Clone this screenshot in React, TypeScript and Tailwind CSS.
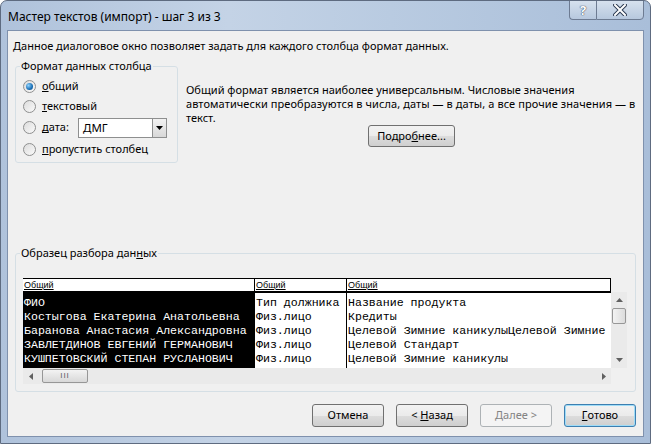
import React from "react";

const ui = { fontFamily: '"Noto Sans", "Segoe UI", sans-serif' };
const mono = { fontFamily: '"Liberation Mono", "Courier New", monospace' };
const small = { fontFamily: '"Liberation Sans", Arial, sans-serif' };

function Radio({ checked, label, u }: { checked?: boolean; label: string; u: number }) {
  return (
    <div className="flex items-center h-[20px]">
      <span className="w-[13px] h-[13px] rounded-full border border-[#8e8f8f] bg-gradient-to-br from-[#dcdcdc] to-[#fafafa] flex items-center justify-center shrink-0">
        {checked && (
          <span className="w-[7px] h-[7px] rounded-full bg-[radial-gradient(circle_at_35%_35%,#8fd3ff,#1a6fb5_60%,#0d4a86)]" />
        )}
      </span>
      <span className="ml-[6px] whitespace-nowrap">
        {label.slice(0, u)}
        <span className="underline">{label.slice(u, u + 1)}</span>
        {label.slice(u + 1)}
      </span>
    </div>
  );
}

function Btn({
  children,
  w = "w-[72px]",
  h = "h-[23px]",
  kind = "normal",
}: {
  children: React.ReactNode;
  w?: string;
  h?: string;
  kind?: "normal" | "default" | "disabled";
}) {
  const border =
    kind === "default"
      ? "border-[#3c7fb1] shadow-[inset_0_0_0_1px_#9fdcf7]"
      : kind === "disabled"
      ? "border-[#adb2b5]"
      : "border-[#707070]";
  const bg =
    kind === "disabled"
      ? "bg-[#f4f4f4]"
      : "bg-[linear-gradient(#f2f2f2_0%,#ebebeb_50%,#dddddd_50%,#cfcfcf_100%)]";
  return (
    <div
      className={`${w} ${h} rounded-[3px] border ${border} ${bg} flex items-center justify-center text-[11px] ${
        kind === "disabled" ? "text-[#838383]" : "text-black"
      }`}
    >
      {children}
    </div>
  );
}

const rows = [
  ["ФИО", "Тип должника", "Название продукта"],
  ["Костыгова Екатерина Анатольевна", "Физ.лицо", "Кредиты"],
  ["Баранова Анастасия Александровна", "Физ.лицо", "Целевой Зимние каникулыЦелевой Зимние"],
  ["ЗАВЛЕТДИНОВ ЕВГЕНИЙ ГЕРМАНОВИЧ", "Физ.лицо", "Целевой Стандарт"],
  ["КУШПЕТОВСКИЙ СТЕПАН РУСЛАНОВИЧ", "Физ.лицо", "Целевой Зимние каникулы"],
];

function Column({ idx, width, dark, last }: { idx: number; width: string; dark?: boolean; last?: boolean }) {
  return (
    <div className={`${width} flex flex-col shrink-0 overflow-hidden ${idx > 0 ? "border-l border-black" : ""}`}>
      <div
        className={`h-[15px] border-t border-black border-b-2 bg-white text-[9px] leading-[12px] pl-[1px] ${last ? "border-r" : ""}`}
        style={small}
      >
        <span className="underline">Общий</span>
      </div>
      <div className={`flex-1 pt-[3px] pl-[1px] ${dark ? "bg-black text-white" : "text-black"}`} style={mono}>
        {rows.map((r, i) => (
          <div key={i} className="h-[14px] leading-[14px] text-[11.6px] whitespace-nowrap">
            {r[idx]}
          </div>
        ))}
      </div>
    </div>
  );
}

function Preview() {
  return (
    <div className="flex flex-col w-[604px]">
      <div className="flex">
        <div className="w-[588px] h-[90px] bg-white flex overflow-hidden">
          <Column idx={0} width="w-[231px]" dark />
          <Column idx={1} width="w-[92px]" />
          <Column idx={2} width="flex-1" last />
        </div>
        {/* vertical scrollbar */}
        <div className="w-[16px] h-[90px] flex flex-col">
          <div className="h-[14px] bg-[#f0f0f0]" />
          <div className="flex-1 bg-[#eaeaea] flex flex-col items-center relative">
            <svg width="7" height="4" className="mt-[6px]"><path d="M0 4 L3.5 0 L7 4 Z" fill="#606060" /></svg>
            <div className="mt-[6px] w-[14px] h-[16px] rounded-[2px] border border-[#979797] bg-gradient-to-r from-[#f3f3f3] to-[#dcdcdc]" />
            <svg width="7" height="4" className="absolute bottom-[6px]"><path d="M0 0 L7 0 L3.5 4 Z" fill="#606060" /></svg>
          </div>
        </div>
      </div>
      {/* horizontal scrollbar */}
      <div className="flex">
        <div className="w-[588px] h-[16px] bg-[#eaeaea] flex items-center relative">
          <svg width="4" height="7" className="ml-[6px]"><path d="M4 0 L0 3.5 L4 7 Z" fill="#606060" /></svg>
          <div className="ml-[9px] w-[46px] h-[14px] rounded-[2px] border border-[#979797] bg-gradient-to-b from-[#f3f3f3] to-[#d8d8d8] flex items-center justify-center text-[#606060] text-[8px] leading-none tracking-[1px]" style={small}>
            III
          </div>
          <svg width="4" height="7" className="absolute right-[5px]"><path d="M0 0 L4 3.5 L0 7 Z" fill="#606060" /></svg>
        </div>
        <div className="w-[16px] h-[16px] bg-[#f0f0f0]" />
      </div>
    </div>
  );
}

export default function App() {
  return (
    <div
      className="w-[651px] h-[444px] overflow-hidden rounded-t-[7px] border border-[#5e6b80] bg-[linear-gradient(90deg,#afc2db_0%,#c4d3e6_35%,#b9cbe1_60%,#a9bed9_100%)] flex flex-col text-[11px] text-black"
      style={ui}
    >
      {/* title bar */}
      <div className="h-[29px] flex items-start relative shrink-0">
        <div className="pl-[7px] pt-[8px] text-[12px] leading-[16px] text-black">
          Мастер текстов (импорт) - шаг 3 из 3
        </div>
        <div className="absolute right-[6px] top-[-1px] flex">
          <div className="w-[27px] h-[20px] border border-[#6d7b92] border-r-0 rounded-bl-[4px] bg-[linear-gradient(#d6e1ee,#b7c8de)] flex items-center justify-center">
            <span className="text-white font-bold text-[13px] leading-none" style={{ textShadow: "0 0 1px #2c3a52, 0 0 1px #2c3a52" }}>?</span>
          </div>
          <div className="w-[48px] h-[20px] border border-[#6d7b92] rounded-br-[4px] bg-[linear-gradient(#d6e1ee,#b7c8de)] flex items-center justify-center">
            <svg width="14" height="12" viewBox="0 0 14 12">
              <path d="M2 1 L12 11 M12 1 L2 11" stroke="#2c3a52" strokeWidth="4" strokeLinecap="square" />
              <path d="M2 1 L12 11 M12 1 L2 11" stroke="#ffffff" strokeWidth="2" strokeLinecap="square" />
            </svg>
          </div>
        </div>
      </div>

      {/* client area */}
      <div className="mx-[6px] h-[407px] border border-[#7f91ad] bg-[#f0f0f0] flex flex-col pl-[7px] pr-[7px] shrink-0 overflow-hidden">
        <div className="pt-[7px] h-[22px] leading-[15px] -ml-[2px]">
          Данное диалоговое окно позволяет задать для каждого столбца формат данных.
        </div>

        <div className="flex mt-[6px]">
          <fieldset className="w-[163px] min-w-0 shrink-0 h-[104px] border border-[#d5dfe5] rounded-[3px] pl-[8px] pt-[4px] m-0">
            <legend className="px-[1px] ml-[-4px] text-[11px] leading-[14px]">Формат данных столбца</legend>
            <div className="flex flex-col -ml-[1px] -mt-[1px]">
              <Radio checked label="общий" u={0} />
              <Radio label="текстовый" u={0} />
              <div className="flex items-center h-[23px]">
                <div className="w-[55px]">
                  <Radio label="дата:" u={0} />
                </div>
                <div className="w-[89px] h-[20px] border border-[#8e8f8f] bg-white flex items-center">
                  <span className="flex-1 pl-[4px] leading-[16px] text-[11.5px]">ДМГ</span>
                  <div className="w-[14px] h-[18px] border-l border-[#8e8f8f] bg-[linear-gradient(#f2f2f2,#d8d8d8)] flex items-center justify-center">
                    <svg width="7" height="4"><path d="M0 0 L7 0 L3.5 4 Z" fill="#000" /></svg>
                  </div>
                </div>
              </div>
              <Radio label="пропустить столбец" u={0} />
            </div>
          </fieldset>

          <div className="ml-[8px] pt-[24px] flex flex-col shrink-0">
            <div className="leading-[14px] whitespace-nowrap">
              Общий формат является наиболее универсальным. Числовые значения
              <br />
              <span className="tracking-[0.08px]">
                автоматически преобразуются в числа, даты — в даты, а все прочие значения — в
              </span>
              <br />
              текст.
            </div>
            <div className="ml-[182px]">
              <Btn w="w-[87px]" h="h-[22px]">
                Подро<span className="underline">б</span>нее...
              </Btn>
            </div>
          </div>
        </div>

        <fieldset className="mt-[83px] w-[621px] min-w-0 shrink-0 h-[146px] border border-[#d5dfe5] rounded-[3px] m-0 pl-[7px] pt-[18px]">
          <legend className="px-[1px] ml-[-3px] text-[11px] leading-[14px]">
            Образец разбора дан<span className="underline">н</span>ых
          </legend>
          <Preview />
        </fieldset>

        <div className="flex justify-end gap-[12px] mt-[12px]">
          <Btn>Отмена</Btn>
          <Btn>
            &lt;&nbsp;<span className="underline">Н</span>азад
          </Btn>
          <Btn kind="disabled">Далее &gt;</Btn>
          <Btn kind="default">
            <span className="underline">Г</span>отово
          </Btn>
        </div>
      </div>
    </div>
  );
}
